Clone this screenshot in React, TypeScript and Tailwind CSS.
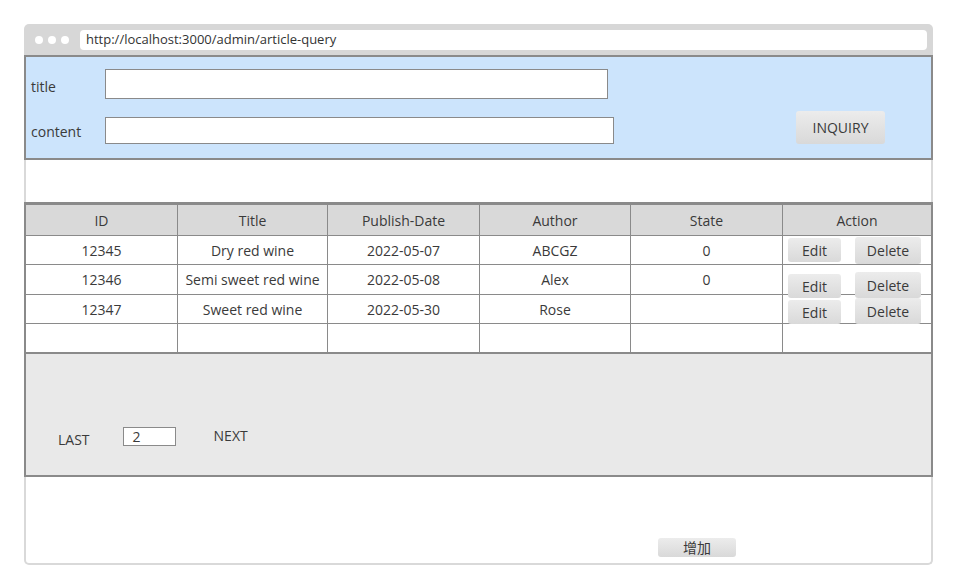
import React from 'react'

const font = { fontFamily: '"Open Sans", "Noto Sans CJK SC", sans-serif' }

const rows = [
  { id: '12345', title: 'Dry red wine', date: '2022-05-07', author: 'ABCGZ', state: '0', h: 'h-[29px]', edit: 'mt-[2px]', del: 'mt-[1px] h-[27px]' },
  { id: '12346', title: 'Semi sweet red wine', date: '2022-05-08', author: 'Alex', state: '0', h: 'h-[30px]', edit: 'mt-[9px] h-[23px]', del: 'mt-[7px] h-[24px]' },
  { id: '12347', title: 'Sweet red wine', date: '2022-05-30', author: 'Rose', state: '', h: 'h-[29px]', edit: 'mt-[5px] h-[22px]', del: 'mt-[3px] h-[24px]' },
]

const cols = ['w-[151px]', 'w-[150px]', 'w-[152px]', 'w-[151px]', 'w-[152px]', 'flex-1']

function Cell({ i, children, cls = '' }: { i: number; children?: React.ReactNode; cls?: string }) {
  return (
    <div className={`${cols[i]} ${i > 0 ? 'border-l border-[#8a8a8a]' : ''} flex items-center justify-center ${cls}`}>
      {children}
    </div>
  )
}

const btn = 'rounded-[3px] bg-gradient-to-b from-[#ececec] to-[#d9d9d9] text-[14px] text-[#3a3a3a] flex items-center justify-center'

export default function App() {
  return (
    <div className="w-[957px] h-[588px] bg-white pl-[24px] pt-[24px]" style={font}>
      <div className="w-[909px] flex flex-col">
        {/* browser bar */}
        <div className="h-[31px] bg-[#d7d7d7] rounded-t-[5px] flex items-center pl-[11px] pr-[6px]">
          <div className="flex gap-[5px]">
            <div className="w-[8px] h-[8px] rounded-full bg-white" />
            <div className="w-[8px] h-[8px] rounded-full bg-white" />
            <div className="w-[8px] h-[8px] rounded-full bg-white" />
          </div>
          <div className="ml-[11px] flex-1 h-[20px] bg-white rounded-[4px] flex items-center pl-[6px] text-[13px] text-[#333]">
            http://localhost:3000/admin/article-query
          </div>
        </div>

        {/* query panel */}
        <div className="h-[105px] border-2 border-[#8a8a8a] bg-[#cce4fc] pt-[12px] text-[14px] text-[#3a3a3a]">
          <div className="flex items-center h-[30px]">
            <div className="w-[79px] pl-[5px] mt-[5px]">title</div>
            <div className="w-[503px] h-[30px] bg-white border border-[#8a8a8a]" />
          </div>
          <div className="flex items-center h-[27px] mt-[18px]">
            <div className="w-[79px] pl-[5px] mt-[1px]">content</div>
            <div className="w-[509px] h-[27px] bg-white border border-[#8a8a8a]" />
            <div className={`${btn} ml-[182px] mb-[6px] w-[89px] h-[33px]`}>INQUIRY</div>
          </div>
        </div>

        <div className="h-[42px] border-x-2 border-[#d9d9d9]" />

        {/* table + pager */}
        <div className="border-x-2 border-b-2 border-t-[3px] border-[#8a8a8a] text-[14px] text-[#3a3a3a]">
          <div className="flex h-[30px] bg-[#d9d9d9]">
            {['ID', 'Title', 'Publish-Date', 'Author', 'State', 'Action'].map((t, i) => (
              <Cell key={t} i={i}>{t}</Cell>
            ))}
          </div>
          {rows.map((r) => (
            <div key={r.id} className={`flex ${r.h} border-t border-[#8a8a8a]`}>
              <Cell i={0}>{r.id}</Cell>
              <Cell i={1}>{r.title}</Cell>
              <Cell i={2}>{r.date}</Cell>
              <Cell i={3}>{r.author}</Cell>
              <Cell i={4} cls="!items-start pt-[4px]">{r.state}</Cell>
              <div className="flex-1 border-l border-[#8a8a8a] flex items-start pl-[5px]">
                <div className={`${btn} relative z-10 w-[53px] h-[24px] ${r.edit}`}>Edit</div>
                <div className={`${btn} relative z-10 ml-[14px] w-[66px] h-[26px] ${r.del}`}>Delete</div>
              </div>
            </div>
          ))}
          <div className="flex h-[29px] border-t border-[#8a8a8a]">
            {cols.map((_, i) => (
              <Cell key={i} i={i} />
            ))}
          </div>
          <div className="h-[123px] border-t-2 border-[#8a8a8a] bg-[#e9e9e9] flex items-start pt-[73px]">
            <div className="ml-[32px] mt-[2px] h-[20px] flex items-center">LAST</div>
            <div className="ml-[33px] w-[53px] h-[19px] bg-white border border-[#8a8a8a] flex items-center pl-[9px]">2</div>
            <div className="ml-[38px] -mt-[2px] h-[20px] flex items-center">NEXT</div>
          </div>
        </div>

        {/* footer */}
        <div className="h-[88px] border-x-2 border-b-2 border-[#d9d9d9] rounded-b-[5px] pt-[61px] pl-[632px]">
          <div className={`${btn} w-[78px] h-[19px] text-[13px]`}>增加</div>
        </div>
      </div>
    </div>
  )
}
